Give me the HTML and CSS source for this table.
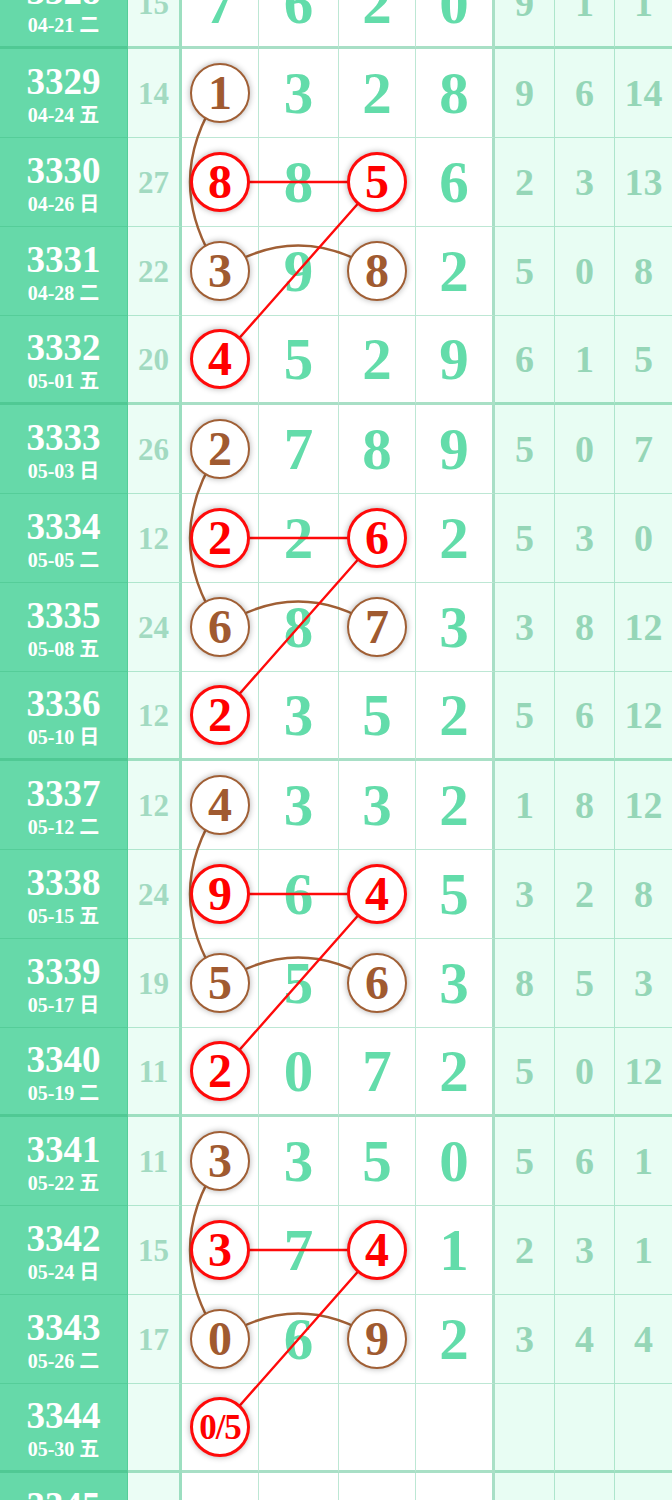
FILE: index.html
```html
<!DOCTYPE html>
<html lang="zh">
<head>
<meta charset="utf-8">
<title>走势图</title>
<link rel="stylesheet" href="styles.css">
</head>
<body>
<div class="chart">
  <svg class="links" width="672" height="1602" viewBox="0 -40 672 1602">
    <g class="brown">
      <path d="M220 93 Q160 182 220 271"/><path d="M220 271 Q298 220 377 271"/>
      <path d="M220 449 Q160 538 220 627"/><path d="M220 627 Q298 576 377 627"/>
      <path d="M220 805 Q160 894 220 983"/><path d="M220 983 Q298 932 377 983"/>
      <path d="M220 1161 Q160 1250 220 1339"/><path d="M220 1339 Q298 1288 377 1339"/>
    </g>
    <g class="red">
      <path d="M220 182 H377 L220 360"/>
      <path d="M220 538 H377 L220 716"/>
      <path d="M220 894 H377 L220 1072"/>
      <path d="M220 1250 H377 L220 1428"/>
    </g>
  </svg>

  <div class="row end">
    <div class="c id"><span class="no">3328</span><span class="dt">04-21 二</span></div>
    <div class="c sum">15</div>
    <div class="c n">7</div><div class="c n">6</div><div class="c n">2</div><div class="c n last">0</div>
    <div class="c r">9</div><div class="c r">1</div><div class="c r">1</div>
  </div>

  <div class="row">
    <div class="c id"><span class="no">3329</span><span class="dt">04-24 五</span></div>
    <div class="c sum">14</div>
    <div class="c n"><span class="ball b">1</span></div><div class="c n">3</div><div class="c n">2</div><div class="c n last">8</div>
    <div class="c r">9</div><div class="c r">6</div><div class="c r">14</div>
  </div>
  <div class="row">
    <div class="c id"><span class="no">3330</span><span class="dt">04-26 日</span></div>
    <div class="c sum">27</div>
    <div class="c n"><span class="ball rd">8</span></div><div class="c n">8</div><div class="c n"><span class="ball rd">5</span></div><div class="c n last">6</div>
    <div class="c r">2</div><div class="c r">3</div><div class="c r">13</div>
  </div>
  <div class="row">
    <div class="c id"><span class="no">3331</span><span class="dt">04-28 二</span></div>
    <div class="c sum">22</div>
    <div class="c n"><span class="ball b">3</span></div><div class="c n">9</div><div class="c n"><span class="ball b">8</span></div><div class="c n last">2</div>
    <div class="c r">5</div><div class="c r">0</div><div class="c r">8</div>
  </div>
  <div class="row end">
    <div class="c id"><span class="no">3332</span><span class="dt">05-01 五</span></div>
    <div class="c sum">20</div>
    <div class="c n"><span class="ball rd">4</span></div><div class="c n">5</div><div class="c n">2</div><div class="c n last">9</div>
    <div class="c r">6</div><div class="c r">1</div><div class="c r">5</div>
  </div>

  <div class="row">
    <div class="c id"><span class="no">3333</span><span class="dt">05-03 日</span></div>
    <div class="c sum">26</div>
    <div class="c n"><span class="ball b">2</span></div><div class="c n">7</div><div class="c n">8</div><div class="c n last">9</div>
    <div class="c r">5</div><div class="c r">0</div><div class="c r">7</div>
  </div>
  <div class="row">
    <div class="c id"><span class="no">3334</span><span class="dt">05-05 二</span></div>
    <div class="c sum">12</div>
    <div class="c n"><span class="ball rd">2</span></div><div class="c n">2</div><div class="c n"><span class="ball rd">6</span></div><div class="c n last">2</div>
    <div class="c r">5</div><div class="c r">3</div><div class="c r">0</div>
  </div>
  <div class="row">
    <div class="c id"><span class="no">3335</span><span class="dt">05-08 五</span></div>
    <div class="c sum">24</div>
    <div class="c n"><span class="ball b">6</span></div><div class="c n">8</div><div class="c n"><span class="ball b">7</span></div><div class="c n last">3</div>
    <div class="c r">3</div><div class="c r">8</div><div class="c r">12</div>
  </div>
  <div class="row end">
    <div class="c id"><span class="no">3336</span><span class="dt">05-10 日</span></div>
    <div class="c sum">12</div>
    <div class="c n"><span class="ball rd">2</span></div><div class="c n">3</div><div class="c n">5</div><div class="c n last">2</div>
    <div class="c r">5</div><div class="c r">6</div><div class="c r">12</div>
  </div>

  <div class="row">
    <div class="c id"><span class="no">3337</span><span class="dt">05-12 二</span></div>
    <div class="c sum">12</div>
    <div class="c n"><span class="ball b">4</span></div><div class="c n">3</div><div class="c n">3</div><div class="c n last">2</div>
    <div class="c r">1</div><div class="c r">8</div><div class="c r">12</div>
  </div>
  <div class="row">
    <div class="c id"><span class="no">3338</span><span class="dt">05-15 五</span></div>
    <div class="c sum">24</div>
    <div class="c n"><span class="ball rd">9</span></div><div class="c n">6</div><div class="c n"><span class="ball rd">4</span></div><div class="c n last">5</div>
    <div class="c r">3</div><div class="c r">2</div><div class="c r">8</div>
  </div>
  <div class="row">
    <div class="c id"><span class="no">3339</span><span class="dt">05-17 日</span></div>
    <div class="c sum">19</div>
    <div class="c n"><span class="ball b">5</span></div><div class="c n">5</div><div class="c n"><span class="ball b">6</span></div><div class="c n last">3</div>
    <div class="c r">8</div><div class="c r">5</div><div class="c r">3</div>
  </div>
  <div class="row end">
    <div class="c id"><span class="no">3340</span><span class="dt">05-19 二</span></div>
    <div class="c sum">11</div>
    <div class="c n"><span class="ball rd">2</span></div><div class="c n">0</div><div class="c n">7</div><div class="c n last">2</div>
    <div class="c r">5</div><div class="c r">0</div><div class="c r">12</div>
  </div>

  <div class="row">
    <div class="c id"><span class="no">3341</span><span class="dt">05-22 五</span></div>
    <div class="c sum">11</div>
    <div class="c n"><span class="ball b">3</span></div><div class="c n">3</div><div class="c n">5</div><div class="c n last">0</div>
    <div class="c r">5</div><div class="c r">6</div><div class="c r">1</div>
  </div>
  <div class="row">
    <div class="c id"><span class="no">3342</span><span class="dt">05-24 日</span></div>
    <div class="c sum">15</div>
    <div class="c n"><span class="ball rd">3</span></div><div class="c n">7</div><div class="c n"><span class="ball rd">4</span></div><div class="c n last">1</div>
    <div class="c r">2</div><div class="c r">3</div><div class="c r">1</div>
  </div>
  <div class="row">
    <div class="c id"><span class="no">3343</span><span class="dt">05-26 二</span></div>
    <div class="c sum">17</div>
    <div class="c n"><span class="ball b">0</span></div><div class="c n">6</div><div class="c n"><span class="ball b">9</span></div><div class="c n last">2</div>
    <div class="c r">3</div><div class="c r">4</div><div class="c r">4</div>
  </div>
  <div class="row end">
    <div class="c id"><span class="no">3344</span><span class="dt">05-30 五</span></div>
    <div class="c sum"></div>
    <div class="c n"><span class="ball rd small">0/5</span></div><div class="c n"></div><div class="c n"></div><div class="c n last"></div>
    <div class="c r"></div><div class="c r"></div><div class="c r"></div>
  </div>

  <div class="row">
    <div class="c id"><span class="no">3345</span><span class="dt">06-01 日</span></div>
    <div class="c sum"></div>
    <div class="c n"></div><div class="c n"></div><div class="c n"></div><div class="c n last"></div>
    <div class="c r"></div><div class="c r"></div><div class="c r"></div>
  </div>
</div>
</body>
</html>
```

FILE: styles.css
```css
html, body {
  margin: 0;
  padding: 0;
  background: #ffffff;
}

body {
  width: 672px;
  height: 1500px;
  overflow: hidden;
  font-family: "Liberation Serif", "Noto Sans CJK SC", serif;
}

.chart {
  position: relative;
  margin-top: -40px;
  width: 672px;
}

.links {
  position: absolute;
  top: 0;
  left: 0;
  z-index: 1;
  pointer-events: none;
}

.links path {
  fill: none;
  stroke-width: 2.4;
}

.links .brown path {
  stroke: #a05f35;
}

.links .red path {
  stroke: #ff0a0a;
}

.row {
  display: grid;
  grid-template-columns: 128px 54px 77px 80px 77px 79px 60px 60px 57px;
  height: 89px;
}

.c {
  box-sizing: border-box;
  display: flex;
  align-items: center;
  justify-content: center;
  border-right: 1px solid rgba(50, 180, 120, 0.32);
  border-bottom: 1px solid rgba(50, 180, 120, 0.32);
  line-height: 1;
  font-weight: 700;
}

.row.end .c {
  border-bottom: 3px solid rgba(50, 180, 120, 0.42);
}

.id {
  flex-direction: column;
  gap: 5px;
  background: #66d9a9;
  color: #ffffff;
  padding-top: 2px;
}

.no {
  font-size: 37px;
  font-weight: 700;
  height: 37px;
  line-height: 1;
}

.dt {
  font-size: 20px;
  font-weight: 700;
  height: 20px;
  line-height: 1;
  white-space: nowrap;
}

.sum {
  background: #ebfdf5;
  color: #a2dac1;
  font-size: 31px;
  border-right: 3px solid rgba(50, 180, 120, 0.42);
}

.n {
  background: #ffffff;
  color: #63dcaa;
  font-size: 59px;
}

.n.last {
  border-right: 3px solid rgba(50, 180, 120, 0.42);
}

.r {
  background: #e8fdf3;
  color: #95d6b7;
  font-size: 38px;
}

.r:last-child {
  border-right: none;
}

.ball {
  position: relative;
  z-index: 2;
  box-sizing: border-box;
  width: 60px;
  height: 60px;
  border-radius: 50%;
  background: #ffffff;
  display: flex;
  align-items: center;
  justify-content: center;
  font-size: 48px;
  font-weight: 700;
  line-height: 1;
  box-shadow: 0 0 6px rgba(0, 0, 0, 0.32);
}

.ball.b {
  color: #a05a30;
  border: 2.5px solid #a05f35;
}

.ball.rd {
  color: #ff0000;
  border: 3px solid #ff0a0a;
}

.ball.small {
  font-size: 35px;
  letter-spacing: -1px;
}
```
